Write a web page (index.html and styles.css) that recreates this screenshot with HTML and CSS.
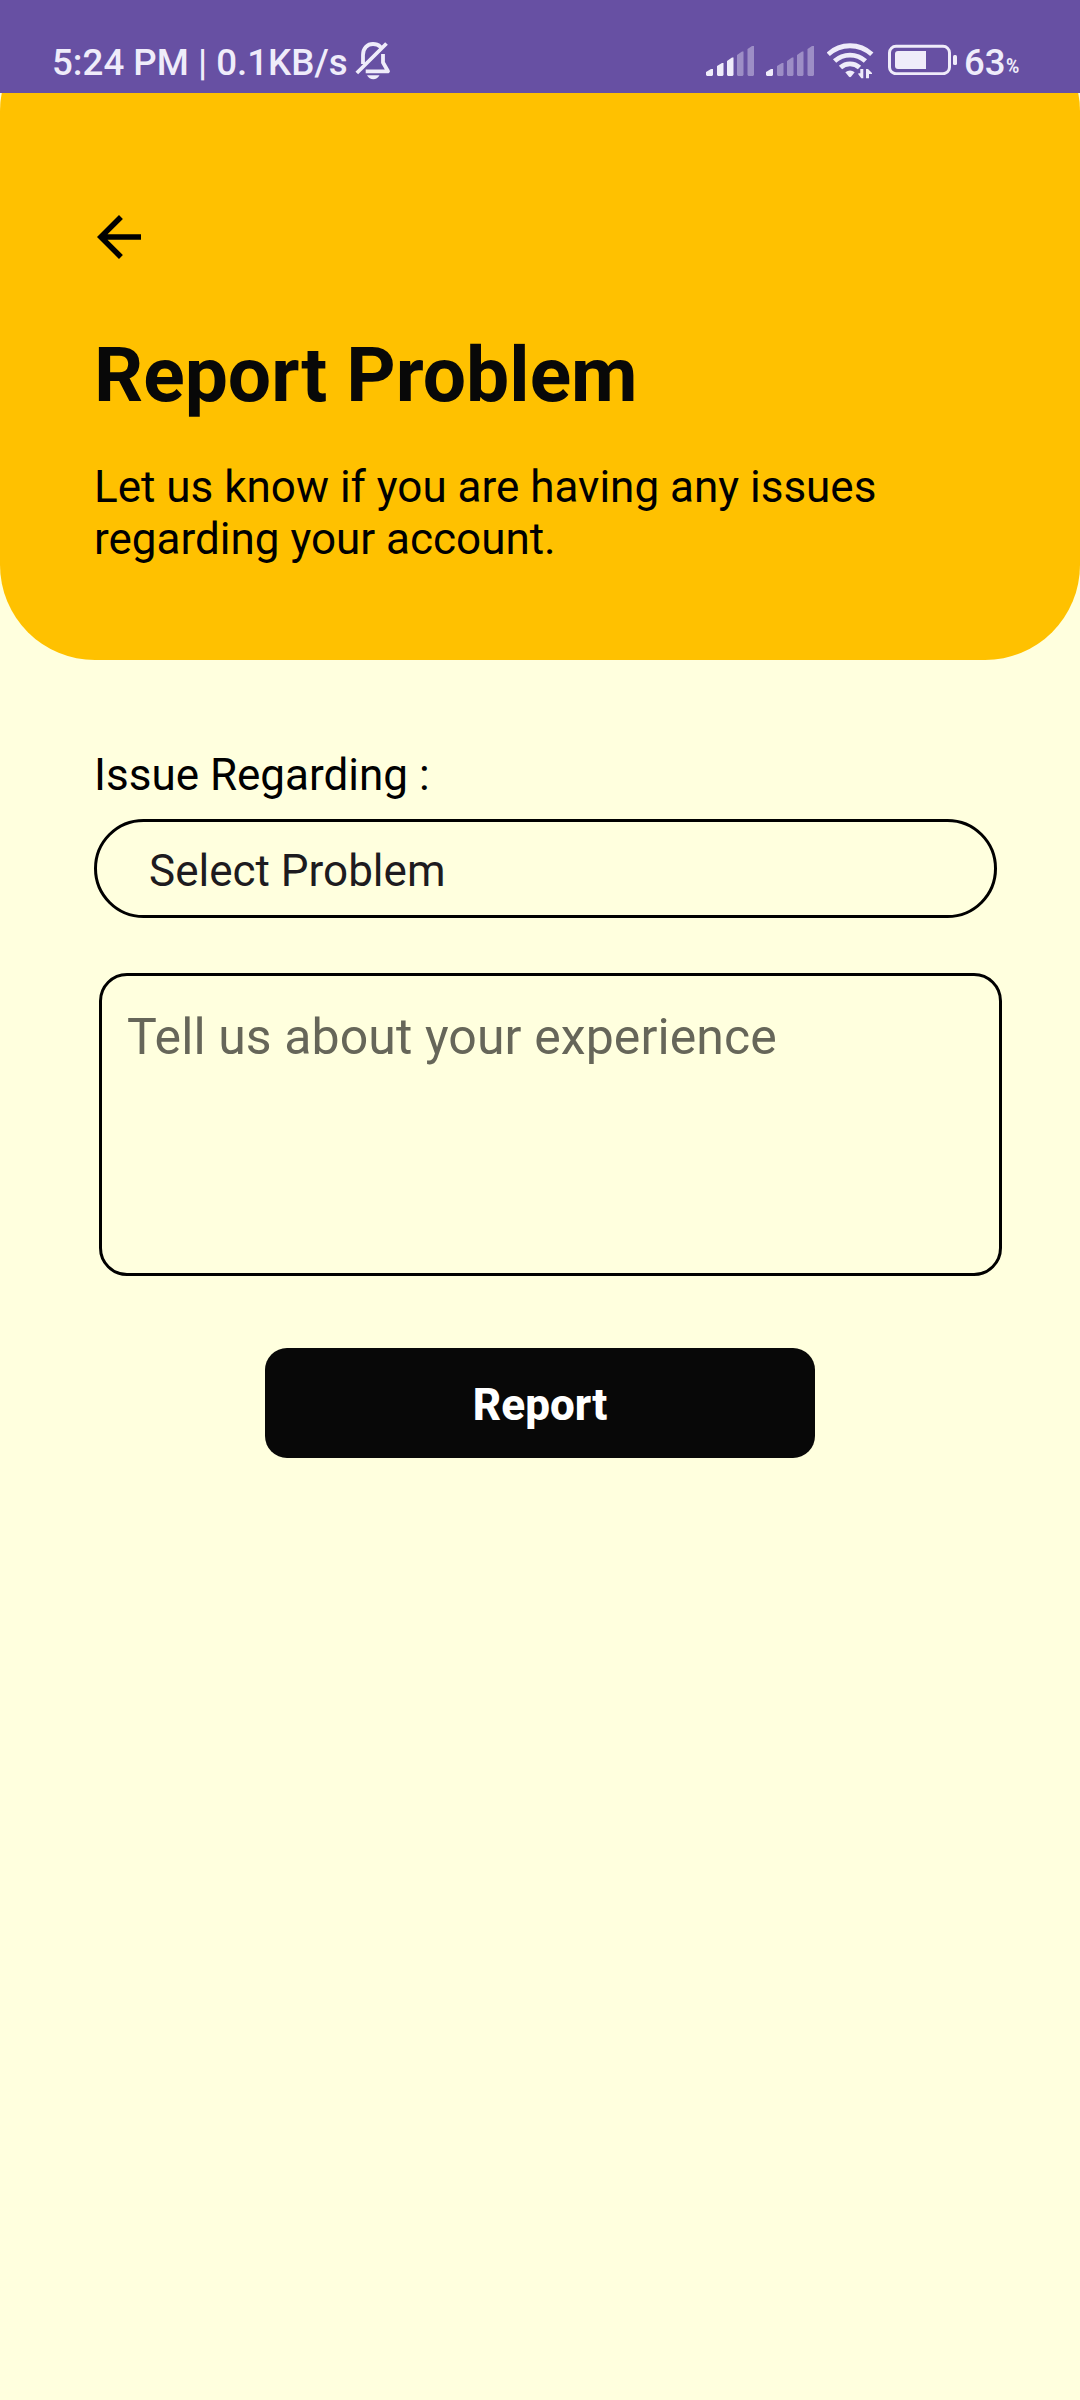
FILE: index.html
```html
<!DOCTYPE html>
<html lang="en">
<head>
<meta charset="utf-8">
<title>Report Problem</title>
<link rel="stylesheet" href="styles.css">
</head>
<body>
<div class="status">
  <span class="status-text">5:24 PM | 0.1KB/s</span>
  <svg class="bell" width="36" height="41" viewBox="0 0 36 41" fill="none" stroke="#efecfa" stroke-width="3.8" stroke-linejoin="round">
    <path d="M8 25V16C8 9 12.500 5 18 5C21 5 23.500 6 25.500 7.800M28 15V23.500L33 32.300H10.700M1.800 34L31.500 4.500"/>
    <path d="M12 36.300H24.500C23 38.800 21 40.200 18.300 40.200S13.500 38.800 12 36.300Z" fill="#efecfa" stroke="none"/>
  </svg>
  <svg class="signal" width="48" height="32" viewBox="0 0 48 32" fill="#efecfa">
    <path d="M0 30V27L5 24H7V30L6 31H1ZM11 30V21L16 18H17.500V30L16.500 31H12ZM21 30V16L26 12.500H27.500V30L26.500 31H22Z"/>
    <path opacity=".4" d="M31 30V10L36 6.500H37.500V30L36.500 31H32ZM41.500 30V4L46 1H48V30L47 31H42.500Z"/>
  </svg>
  <svg class="signal second" width="48" height="32" viewBox="0 0 48 32" fill="#efecfa">
    <path d="M0 30V27L5 24H7V30L6 31H1Z"/>
    <path opacity=".4" d="M11 30V21L16 18H17.500V30L16.500 31H12ZM21 30V16L26 12.500H27.500V30L26.500 31H22ZM31 30V10L36 6.500H37.500V30L36.500 31H32ZM41.500 30V4L46 1H48V30L47 31H42.500Z"/>
  </svg>
  <svg class="wifi" width="47" height="36" viewBox="0 0 47 36" fill="none" stroke="#efecfa" stroke-width="4.800">
    <path d="M1.200 11.300A32 32 0 0 1 44.800 11.300M7.600 18.100A22.700 22.700 0 0 1 38.400 18.100M13.500 24.500A14 14 0 0 1 32.500 24.500"/>
    <path d="M18.300 29.300A7.500 7.500 0 0 1 27.700 29.300L24 33.700Q23 34.600 22 33.700Z" fill="#efecfa" stroke="none"/>
    <path d="M36.300 26V35.300H34.300L31.300 31.300V30.300H33.300V26ZM39 35.300V26H41L45 30V31H42V35.300Z" fill="#efecfa" stroke="none"/>
  </svg>
  <svg class="battery" width="69" height="31" viewBox="0 0 69 31" fill="#efecfa">
    <rect x="1.500" y="2.300" width="60" height="27.400" rx="6.500" fill="none" stroke="#efecfa" stroke-width="3"/>
    <path d="M10 7H38V25H10Q7 25 7 22V10Q7 7 10 7Z"/>
    <rect x="65" y="11" width="4" height="10" rx="1.500"/>
  </svg>
  <span class="percent">63</span><span class="sign">%</span>
</div>
<header class="hero">
  <svg class="back" width="66" height="66" viewBox="0 0 24 24"><path d="M20 11H7.830l5.590-5.590L12 4l-8 8 8 8 1.410-1.410L7.830 13H20v-2z"/></svg>
  <h1 class="title">Report Problem</h1>
  <p class="lead">Let us know if you are having any issues<br>regarding your account.</p>
</header>
<main class="form">
  <div class="label">Issue Regarding :</div>
  <div class="select">Select Problem</div>
  <div class="message">Tell us about your experience</div>
  <button class="submit">Report</button>
</main>
</body>
</html>
```
FILE: styles.css
```css
* { box-sizing: border-box; }
body {
  margin: 0;
  height: 2400px;
  overflow: hidden;
  background: #ffffde;
  font-family: Roboto, sans-serif;
  color: #000;
}
.status {
  position: relative;
  z-index: 1;
  display: flex;
  align-items: flex-start;
  height: 93px;
  padding-left: 52px;
  background: #6750a3;
  color: #efecfa;
  font-weight: 500;
  white-space: nowrap;
}
.status-text { width: 303px; margin-top: 41px; font-size: 36.7px; line-height: 44px; }
.bell { margin-top: 39px; }
.signal { margin: 45px 0 0 315px; }
.signal.second { margin-left: 12px; }
.wifi { margin: 43px 0 0 13px; }
.battery { margin: 44px 0 0 14px; }
.percent { margin: 41px 0 0 7px; font-size: 36.5px; line-height: 44px; }
.sign { margin: 54px 0 0 0; font-size: 20px; line-height: 24px; font-weight: 700; transform: scaleX(.9); transform-origin: left; }
.hero {
  height: 644px;
  margin-top: -77px;
  padding: 188px 94px 0;
  background: #ffc100;
  border-radius: 95px;
}
.back { display: block; margin-left: -8px; }
.title { margin: 60px 0 0; font-size: 76.8px; line-height: 90px; font-weight: 700; color: #080808; }
.lead { margin: 41px 0 0; font-size: 44px; line-height: 52px; }
.form { display: flex; flex-direction: column; padding: 89px 78px 0 94px; }
.label { font-size: 44px; line-height: 52px; }
.select {
  width: 903px;
  height: 99px;
  margin-top: 18px;
  padding: 23px 52px;
  border: 3px solid #000;
  border-radius: 50px;
  font-size: 44px;
  line-height: 52px;
  color: #1d1b20;
}
.message {
  width: 903px;
  height: 303px;
  margin: 55px 0 0 5px;
  padding: 32px 25px;
  border: 3px solid #000;
  border-radius: 28px;
  font-size: 50px;
  line-height: 58px;
  letter-spacing: .1px;
  color: #666659;
}
.submit {
  width: 550px;
  height: 110px;
  margin: 72px 0 0 171px;
  padding: 3px 0 0;
  border: 0;
  border-radius: 22px;
  background: #080808;
  color: #fff;
  font: 800 44px/52px Roboto, sans-serif;
}
```
